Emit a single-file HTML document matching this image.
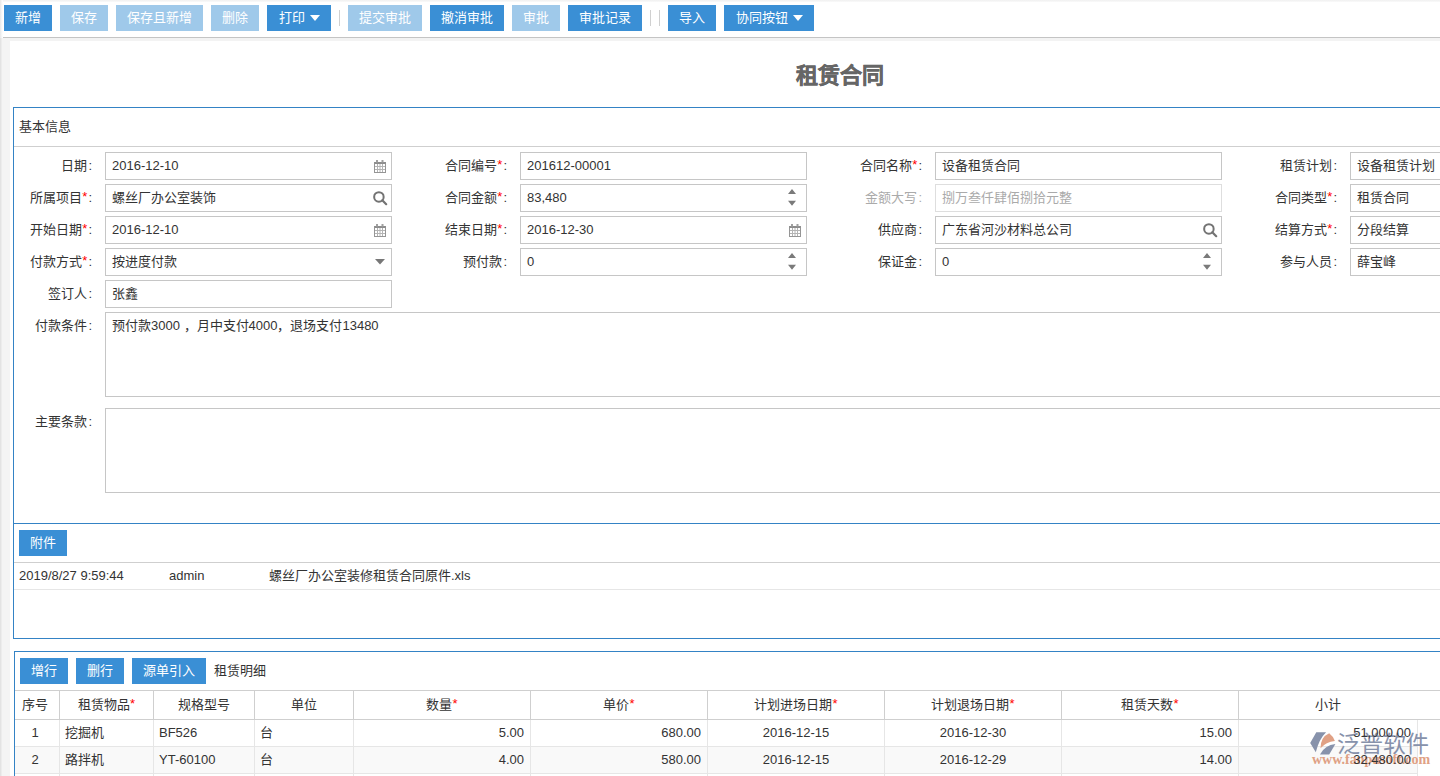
<!DOCTYPE html>
<html lang="zh-CN"><head><meta charset="utf-8">
<style>
*{box-sizing:border-box;margin:0;padding:0}
html,body{width:1440px;height:776px;overflow:hidden;background:#fff;font-family:"Liberation Sans",sans-serif;font-size:13px;color:#333}
.a{position:absolute}
#tb{position:absolute;left:0;top:0;width:1440px;height:38px;background:#fff;border-bottom:1px solid #c4c4c4}
.btn{position:absolute;height:26px;background:#3a8fd5;color:#fff;font-size:13px;line-height:26px;text-align:center;white-space:nowrap}
.btn.lt{background:#9fc9ea}
.caret{display:inline-block;width:0;height:0;border-left:5px solid transparent;border-right:5px solid transparent;border-top:6px solid #fff;vertical-align:middle;margin-left:5px;margin-top:-2px}
.sep{position:absolute;top:10px;width:1px;height:16px;background:#d0d0d0}
.panel{position:absolute;border:1px solid #3483c5;background:#fff}
.lbl{position:absolute;width:150px;text-align:right;line-height:28px;height:28px;white-space:nowrap}
.req{color:#f00;position:relative;top:-1px}
.cl{margin-left:1px}
.inp{position:absolute;height:28px;border:1px solid #c6c6c6;background:#fff;line-height:26px;padding-left:6px;white-space:nowrap;overflow:hidden}
.inp.ds{border-color:#dedede;color:#aaa}
.lbl.ds{color:#aaa}
.ta{position:absolute;border:1px solid #c6c6c6;background:#fff;padding:3px 6px;line-height:20px}
.ic{position:absolute}
.ic svg{display:block}
.cell{position:absolute;white-space:nowrap;line-height:27px;height:27px}
</style></head><body>
<div id="tb">
<div class="btn" style="left:4px;top:5px;width:48px">新增</div>
<div class="btn lt" style="left:60px;top:5px;width:48px">保存</div>
<div class="btn lt" style="left:116px;top:5px;width:87px">保存且新增</div>
<div class="btn lt" style="left:211px;top:5px;width:48px">删除</div>
<div class="btn" style="left:267px;top:5px;width:64px">打印<span class=caret></span></div>
<div class="btn lt" style="left:348px;top:5px;width:74px">提交审批</div>
<div class="btn" style="left:430px;top:5px;width:74px">撤消审批</div>
<div class="btn lt" style="left:512px;top:5px;width:48px">审批</div>
<div class="btn" style="left:568px;top:5px;width:74px">审批记录</div>
<div class="btn" style="left:668px;top:5px;width:48px">导入</div>
<div class="btn" style="left:724px;top:5px;width:90px">协同按钮<span class=caret></span></div>
<div class="sep" style="left:339px"></div>
<div class="sep" style="left:650px"></div>
<div class="sep" style="left:659px"></div>
</div>
<div class="a" style="left:0;top:38px;width:1440px;height:3px;background:#f3f3f3"></div>
<div class="a" style="left:0;top:38px;width:10px;height:738px;background:#f4f4f4"></div>
<div class="a" style="left:0;top:0;width:1440px;height:2px;background:linear-gradient(#f0f0f0,#fafafa)"></div>
<div class="a" style="left:0;top:0;width:3px;height:38px;background:linear-gradient(90deg,#e6e6e6,#f7f7f7 60%,#fff)"></div>
<div class="a" style="left:0;top:38px;width:2px;height:738px;background:linear-gradient(90deg,#dfdfdf,#f0f0f0)"></div>
<div class="a" style="left:796px;top:60px;font-size:22px;font-weight:bold;color:#666;-webkit-text-stroke:0.4px #666;line-height:32px;white-space:nowrap">租赁合同</div>
<div class="panel" style="left:13px;top:107px;width:1460px;height:417px"></div>
<div class="a" style="left:14px;top:146px;width:1440px;height:1px;background:#cfcfcf"></div>
<div class="a" style="left:19px;top:108px;line-height:38px;white-space:nowrap">基本信息</div>
<div class="lbl" style="left:-58px;top:152px">日期<span class=cl>:</span></div>
<div class="inp" style="left:105px;top:152px;width:287px">2016-12-10</div>
<div class="ic" style="left:374px;top:160px;width:12px;height:13px"><svg width="12" height="13" viewBox="0 0 12 13"><path d="M0.5 6.5H11.5M0.5 9.5H11.5M3.5 4v8.5M6 4v8.5M8.5 4v8.5" stroke="#b4b4b4" fill="none"/><rect x="0.5" y="2.5" width="11" height="10" fill="none" stroke="#959595"/><path d="M0.5 3H11.5" stroke="#8c8c8c" stroke-width="2"/><rect x="2" y="0" width="2" height="2.5" fill="#a0a0a0"/><rect x="7.5" y="0" width="2" height="2.5" fill="#a0a0a0"/></svg></div>
<div class="lbl" style="left:357px;top:152px">合同编号<span class=req>*</span><span class=cl>:</span></div>
<div class="inp" style="left:520px;top:152px;width:287px">201612-00001</div>
<div class="lbl" style="left:772px;top:152px">合同名称<span class=req>*</span><span class=cl>:</span></div>
<div class="inp" style="left:935px;top:152px;width:287px">设备租赁合同</div>
<div class="lbl" style="left:1187px;top:152px">租赁计划<span class=cl>:</span></div>
<div class="inp" style="left:1350px;top:152px;width:287px">设备租赁计划</div>
<div class="lbl" style="left:-58px;top:184px">所属项目<span class=req>*</span><span class=cl>:</span></div>
<div class="inp" style="left:105px;top:184px;width:287px">螺丝厂办公室装饰</div>
<div class="ic" style="left:373px;top:191px;width:15px;height:15px"><svg width="15" height="15" viewBox="0 0 15 15"><circle cx="5.9" cy="5.9" r="4.75" fill="none" stroke="#737373" stroke-width="2"/><path d="M9.3 9.3L13.2 13.2" stroke="#737373" stroke-width="2.2" stroke-linecap="round"/></svg></div>
<div class="lbl" style="left:357px;top:184px">合同金额<span class=req>*</span><span class=cl>:</span></div>
<div class="inp" style="left:520px;top:184px;width:287px">83,480</div>
<div class="ic" style="left:788px;top:189px;width:8px;height:17px"><svg width="8" height="17" viewBox="0 0 8 17"><path d="M0 5L4 0L8 5Z M0 11.8L8 11.8L4 16.7Z" fill="#7a7a7a"/></svg></div>
<div class="lbl ds" style="left:772px;top:184px">金额大写<span class=cl>:</span></div>
<div class="inp ds" style="left:935px;top:184px;width:287px">捌万叁仟肆佰捌拾元整</div>
<div class="lbl" style="left:1187px;top:184px">合同类型<span class=req>*</span><span class=cl>:</span></div>
<div class="inp" style="left:1350px;top:184px;width:287px">租赁合同</div>
<div class="lbl" style="left:-58px;top:216px">开始日期<span class=req>*</span><span class=cl>:</span></div>
<div class="inp" style="left:105px;top:216px;width:287px">2016-12-10</div>
<div class="ic" style="left:374px;top:224px;width:12px;height:13px"><svg width="12" height="13" viewBox="0 0 12 13"><path d="M0.5 6.5H11.5M0.5 9.5H11.5M3.5 4v8.5M6 4v8.5M8.5 4v8.5" stroke="#b4b4b4" fill="none"/><rect x="0.5" y="2.5" width="11" height="10" fill="none" stroke="#959595"/><path d="M0.5 3H11.5" stroke="#8c8c8c" stroke-width="2"/><rect x="2" y="0" width="2" height="2.5" fill="#a0a0a0"/><rect x="7.5" y="0" width="2" height="2.5" fill="#a0a0a0"/></svg></div>
<div class="lbl" style="left:357px;top:216px">结束日期<span class=req>*</span><span class=cl>:</span></div>
<div class="inp" style="left:520px;top:216px;width:287px">2016-12-30</div>
<div class="ic" style="left:789px;top:224px;width:12px;height:13px"><svg width="12" height="13" viewBox="0 0 12 13"><path d="M0.5 6.5H11.5M0.5 9.5H11.5M3.5 4v8.5M6 4v8.5M8.5 4v8.5" stroke="#b4b4b4" fill="none"/><rect x="0.5" y="2.5" width="11" height="10" fill="none" stroke="#959595"/><path d="M0.5 3H11.5" stroke="#8c8c8c" stroke-width="2"/><rect x="2" y="0" width="2" height="2.5" fill="#a0a0a0"/><rect x="7.5" y="0" width="2" height="2.5" fill="#a0a0a0"/></svg></div>
<div class="lbl" style="left:772px;top:216px">供应商<span class=cl>:</span></div>
<div class="inp" style="left:935px;top:216px;width:287px">广东省河沙材料总公司</div>
<div class="ic" style="left:1203px;top:223px;width:15px;height:15px"><svg width="15" height="15" viewBox="0 0 15 15"><circle cx="5.9" cy="5.9" r="4.75" fill="none" stroke="#737373" stroke-width="2"/><path d="M9.3 9.3L13.2 13.2" stroke="#737373" stroke-width="2.2" stroke-linecap="round"/></svg></div>
<div class="lbl" style="left:1187px;top:216px">结算方式<span class=req>*</span><span class=cl>:</span></div>
<div class="inp" style="left:1350px;top:216px;width:287px">分段结算</div>
<div class="lbl" style="left:-58px;top:248px">付款方式<span class=req>*</span><span class=cl>:</span></div>
<div class="inp" style="left:105px;top:248px;width:287px">按进度付款</div>
<div class="ic" style="left:375px;top:259px;width:10px;height:6px"><svg width="10" height="6" viewBox="0 0 10 6"><path d="M0 0H10L5 5.5Z" fill="#777"/></svg></div>
<div class="lbl" style="left:357px;top:248px">预付款<span class=cl>:</span></div>
<div class="inp" style="left:520px;top:248px;width:287px">0</div>
<div class="ic" style="left:788px;top:253px;width:8px;height:17px"><svg width="8" height="17" viewBox="0 0 8 17"><path d="M0 5L4 0L8 5Z M0 11.8L8 11.8L4 16.7Z" fill="#7a7a7a"/></svg></div>
<div class="lbl" style="left:772px;top:248px">保证金<span class=cl>:</span></div>
<div class="inp" style="left:935px;top:248px;width:287px">0</div>
<div class="ic" style="left:1203px;top:253px;width:8px;height:17px"><svg width="8" height="17" viewBox="0 0 8 17"><path d="M0 5L4 0L8 5Z M0 11.8L8 11.8L4 16.7Z" fill="#7a7a7a"/></svg></div>
<div class="lbl" style="left:1187px;top:248px">参与人员<span class=cl>:</span></div>
<div class="inp" style="left:1350px;top:248px;width:287px">薛宝峰</div>
<div class="lbl" style="left:-58px;top:280px">签订人<span class=cl>:</span></div>
<div class="inp" style="left:105px;top:280px;width:287px">张鑫</div>
<div class="lbl" style="left:-58px;top:312px">付款条件<span class=cl>:</span></div>
<div class="ta" style="left:105px;top:312px;width:1400px;height:85px">预付款3000 ，月中支付4000，退场支付13480</div>
<div class="lbl" style="left:-58px;top:408px">主要条款<span class=cl>:</span></div>
<div class="ta" style="left:105px;top:408px;width:1400px;height:85px"></div>
<div class="panel" style="left:13px;top:523px;width:1460px;height:116px"></div>
<div class="btn" style="left:19px;top:530px;width:48px">附件</div>
<div class="a" style="left:14px;top:562px;width:1440px;height:1px;background:#cfcfcf"></div>
<div class="a" style="left:14px;top:589px;width:1440px;height:1px;background:#e6e6e6"></div>
<div class="a" style="left:19px;top:563px;line-height:26px;white-space:nowrap">2019/8/27 9:59:44</div>
<div class="a" style="left:169px;top:563px;line-height:26px;white-space:nowrap">admin</div>
<div class="a" style="left:269px;top:563px;line-height:26px;white-space:nowrap">螺丝厂办公室装修租赁合同原件.xls</div>
<div class="panel" style="left:14px;top:651px;width:1460px;height:200px"></div>
<div class="btn" style="left:20px;top:658px;width:48px">增行</div>
<div class="btn" style="left:76px;top:658px;width:48px">删行</div>
<div class="btn" style="left:132px;top:658px;width:74px">源单引入</div>
<div class="a" style="left:214px;top:658px;line-height:26px;white-space:nowrap">租赁明细</div>
<div class="a" style="left:15px;top:690px;width:1440px;height:1px;background:#cfcfcf"></div>
<div class="a" style="left:15px;top:719px;width:1440px;height:1px;background:#cfcfcf"></div>
<div class="a" style="left:15px;top:747px;width:1402px;height:27px;background:#f9f9f9"></div>
<div class="a" style="left:15px;top:746px;width:1402px;height:1px;background:#e6e6e6"></div>
<div class="a" style="left:15px;top:773px;width:1402px;height:1px;background:#e6e6e6"></div>
<div class="a" style="left:59px;top:690px;width:1px;height:30px;background:#cfcfcf"></div>
<div class="a" style="left:59px;top:720px;width:1px;height:60px;background:#e6e6e6"></div>
<div class="a" style="left:153px;top:690px;width:1px;height:30px;background:#cfcfcf"></div>
<div class="a" style="left:153px;top:720px;width:1px;height:60px;background:#e6e6e6"></div>
<div class="a" style="left:254px;top:690px;width:1px;height:30px;background:#cfcfcf"></div>
<div class="a" style="left:254px;top:720px;width:1px;height:60px;background:#e6e6e6"></div>
<div class="a" style="left:353px;top:690px;width:1px;height:30px;background:#cfcfcf"></div>
<div class="a" style="left:353px;top:720px;width:1px;height:60px;background:#e6e6e6"></div>
<div class="a" style="left:530px;top:690px;width:1px;height:30px;background:#cfcfcf"></div>
<div class="a" style="left:530px;top:720px;width:1px;height:60px;background:#e6e6e6"></div>
<div class="a" style="left:707px;top:690px;width:1px;height:30px;background:#cfcfcf"></div>
<div class="a" style="left:707px;top:720px;width:1px;height:60px;background:#e6e6e6"></div>
<div class="a" style="left:884px;top:690px;width:1px;height:30px;background:#cfcfcf"></div>
<div class="a" style="left:884px;top:720px;width:1px;height:60px;background:#e6e6e6"></div>
<div class="a" style="left:1061px;top:690px;width:1px;height:30px;background:#cfcfcf"></div>
<div class="a" style="left:1061px;top:720px;width:1px;height:60px;background:#e6e6e6"></div>
<div class="a" style="left:1238px;top:690px;width:1px;height:30px;background:#cfcfcf"></div>
<div class="a" style="left:1238px;top:720px;width:1px;height:60px;background:#e6e6e6"></div>
<div class="a" style="left:1417px;top:720px;width:1px;height:60px;background:#e6e6e6"></div>
<div class="a" style="left:1305px;top:726px;width:135px;height:42px">
<svg width="135" height="42" viewBox="0 0 135 42">
<path d="M11.3 6.2 L21.1 6.2 Q14 13 10.8 26.3 L5.2 17 Z" fill="#8792ab"/>
<path d="M15.5 22.2 Q15.5 11 24.2 7.2 Q28 10 29.9 15 Q21 16 15.5 22.2 Z" fill="#e0a185"/>
<path d="M15 28.4 L24.2 28.4 L30.4 18 Q20 19 15 28.4 Z" fill="#8792ab"/>
<text x="32" y="25.5" font-size="23" fill="#8792ab" font-family="Liberation Sans">泛普软件</text>
<text x="7" y="38" font-size="14" font-weight="bold" fill="#e0a185" font-family="Liberation Serif">www.fanpusoft.com</text>
</svg></div>
<div class="cell" style="left:15px;top:691px;width:44px;height:28px;line-height:28px;text-align:center;padding-right:4px;">序号</div>
<div class="cell" style="left:60px;top:691px;width:93px;height:28px;line-height:28px;text-align:center;">租赁物品<span class=req>*</span></div>
<div class="cell" style="left:154px;top:691px;width:100px;height:28px;line-height:28px;text-align:center;">规格型号</div>
<div class="cell" style="left:255px;top:691px;width:98px;height:28px;line-height:28px;text-align:center;">单位</div>
<div class="cell" style="left:354px;top:691px;width:176px;height:28px;line-height:28px;text-align:center;">数量<span class=req>*</span></div>
<div class="cell" style="left:531px;top:691px;width:176px;height:28px;line-height:28px;text-align:center;">单价<span class=req>*</span></div>
<div class="cell" style="left:708px;top:691px;width:176px;height:28px;line-height:28px;text-align:center;">计划进场日期<span class=req>*</span></div>
<div class="cell" style="left:885px;top:691px;width:176px;height:28px;line-height:28px;text-align:center;">计划退场日期<span class=req>*</span></div>
<div class="cell" style="left:1062px;top:691px;width:176px;height:28px;line-height:28px;text-align:center;">租赁天数<span class=req>*</span></div>
<div class="cell" style="left:1239px;top:691px;width:178px;height:28px;line-height:28px;text-align:center;">小计</div>
<div class="cell" style="left:15px;top:719px;width:44px;text-align:center;padding:0 8px 0 4px;">1</div>
<div class="cell" style="left:60px;top:719px;width:93px;text-align:left;padding:0 6px 0 5px;">挖掘机</div>
<div class="cell" style="left:154px;top:719px;width:100px;text-align:left;padding:0 6px 0 5px;">BF526</div>
<div class="cell" style="left:255px;top:719px;width:98px;text-align:left;padding:0 6px 0 5px;">台</div>
<div class="cell" style="left:354px;top:719px;width:176px;text-align:right;padding:0 6px;">5.00</div>
<div class="cell" style="left:531px;top:719px;width:176px;text-align:right;padding:0 6px;">680.00</div>
<div class="cell" style="left:708px;top:719px;width:176px;text-align:center;padding:0 6px;">2016-12-15</div>
<div class="cell" style="left:885px;top:719px;width:176px;text-align:center;padding:0 6px;">2016-12-30</div>
<div class="cell" style="left:1062px;top:719px;width:176px;text-align:right;padding:0 6px;">15.00</div>
<div class="cell" style="left:1239px;top:719px;width:178px;text-align:right;padding:0 6px;">51,000.00</div>
<div class="cell" style="left:15px;top:746px;width:44px;text-align:center;padding:0 8px 0 4px;">2</div>
<div class="cell" style="left:60px;top:746px;width:93px;text-align:left;padding:0 6px 0 5px;">路拌机</div>
<div class="cell" style="left:154px;top:746px;width:100px;text-align:left;padding:0 6px 0 5px;">YT-60100</div>
<div class="cell" style="left:255px;top:746px;width:98px;text-align:left;padding:0 6px 0 5px;">台</div>
<div class="cell" style="left:354px;top:746px;width:176px;text-align:right;padding:0 6px;">4.00</div>
<div class="cell" style="left:531px;top:746px;width:176px;text-align:right;padding:0 6px;">580.00</div>
<div class="cell" style="left:708px;top:746px;width:176px;text-align:center;padding:0 6px;">2016-12-15</div>
<div class="cell" style="left:885px;top:746px;width:176px;text-align:center;padding:0 6px;">2016-12-29</div>
<div class="cell" style="left:1062px;top:746px;width:176px;text-align:right;padding:0 6px;">14.00</div>
<div class="cell" style="left:1239px;top:746px;width:178px;text-align:right;padding:0 6px;">32,480.00</div>
</body></html>
